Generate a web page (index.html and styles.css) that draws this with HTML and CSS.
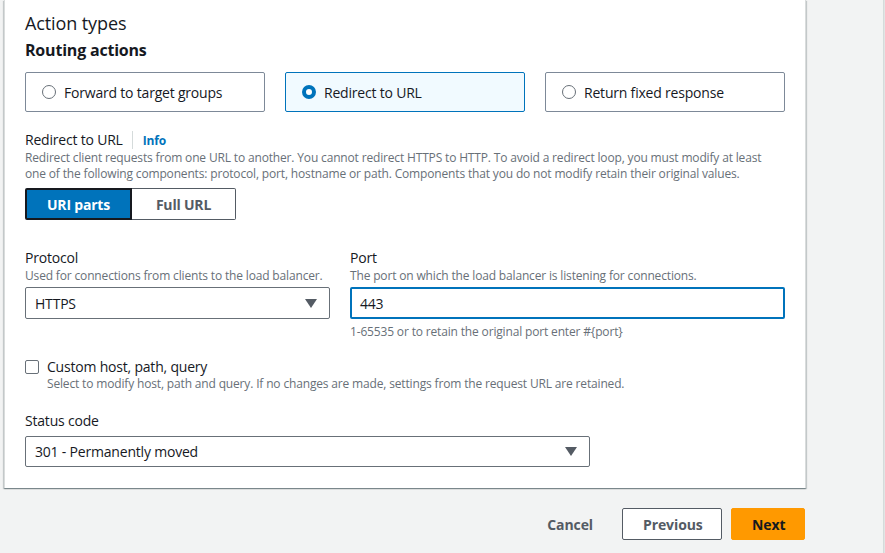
FILE: index.html
```html
<!DOCTYPE html>
<html>
<head>
<meta charset="utf-8">
<link rel="stylesheet" href="styles.css">
</head>
<body>
<div class="page">
  <div class="main">
    <div class="card">
      <h2 class="title">Action types</h2>
      <h3 class="subtitle">Routing actions</h3>
      <div class="tiles">
        <div class="tile"><span class="radio"></span><span>Forward to target groups</span></div>
        <div class="tile selected"><span class="radio on"></span><span>Redirect to URL</span></div>
        <div class="tile"><span class="radio"></span><span>Return fixed response</span></div>
      </div>
      <div class="field-head">
        <span class="label">Redirect to URL</span><span class="divider"></span><a class="info">Info</a>
      </div>
      <p class="desc">Redirect client requests from one URL to another. You cannot redirect HTTPS to HTTP. To avoid a redirect loop, you must modify at least one of the following components: protocol, port, hostname or path. Components that you do not modify retain their original values.</p>
      <div class="segmented">
        <div class="seg active">URI parts</div>
        <div class="seg">Full URL</div>
      </div>
      <div class="row">
        <div class="col col-left">
          <div class="label">Protocol</div>
          <div class="desc nowrap">Used for connections from clients to the load balancer.</div>
          <div class="select"><span>HTTPS</span><span class="caret"></span></div>
        </div>
        <div class="col col-right">
          <div class="label">Port</div>
          <div class="desc">The port on which the load balancer is listening for connections.</div>
          <div class="input focused">443</div>
          <div class="hint">1-65535 or to retain the original port enter #{port}</div>
        </div>
      </div>
      <div class="check-row">
        <span class="checkbox"></span>
        <div>
          <div class="check-label">Custom host, path, query</div>
          <div class="desc">Select to modify host, path and query. If no changes are made, settings from the request URL are retained.</div>
        </div>
      </div>
      <div class="label status-label">Status code</div>
      <div class="select wide"><span>301 - Permanently moved</span><span class="caret"></span></div>
    </div>
    <div class="actions">
      <button class="btn link">Cancel</button>
      <button class="btn normal">Previous</button>
      <button class="btn primary">Next</button>
    </div>
  </div>
  <div class="side"></div>
</div>
</body>
</html>
```

FILE: styles.css
```css
* { box-sizing: border-box; }
html, body { margin: 0; padding: 0; }
body {
  background: #f2f3f3;
  font-family: "Open Sans", "Noto Sans", sans-serif;
  color: #16191f;
  width: 885px;
  height: 553px;
  overflow: hidden;
  letter-spacing: -0.2px;
}
.page {
  display: flex;
  height: 553px;
}
.main {
  width: 806px;
  padding-left: 4px;
}
.side {
  margin-left: 77px;
  width: 2px;
  background: #e3e4e4;
  border-left: 1px solid #d5dbdb;
}
.card {
  background: #fff;
  border-left: 1px solid #d9dcdc;
  border-right: 1px solid #d9dcdc;
  box-shadow: 0 1px 1px 0 rgba(0,28,36,.3), 1px 1px 1px 0 rgba(0,28,36,.15), -1px 1px 1px 0 rgba(0,28,36,.15);
  padding: 10px 20px 20px 20px;
  height: 488px;
}
.title {
  margin: 0;
  font-size: 18px;
  font-weight: 400;
  line-height: 26px;
  letter-spacing: -0.1px;
}
.subtitle {
  margin: 2px 0 0 0;
  font-size: 16px;
  font-weight: 700;
  line-height: 24px;
}
.tiles {
  display: flex;
  gap: 20px;
  margin-top: 10px;
}
.tile {
  width: 240px;
  height: 40px;
  border: 1px solid #7d8998;
  border-radius: 2px;
  display: flex;
  align-items: center;
  padding-left: 16px;
  font-size: 14px;
  gap: 8px;
}
.tile.selected {
  background: #f1faff;
  border-color: #0073bb;
}
.radio {
  width: 14px;
  height: 14px;
  border-radius: 50%;
  border: 1.5px solid #687078;
  display: inline-block;
  flex: none;
}
.radio.on {
  border: 4px solid #0073bb;
  background: #fff;
}
.field-head {
  display: flex;
  align-items: center;
  margin-top: 18px;
  height: 20px;
}
.label {
  font-size: 14px;
  line-height: 20px;
}
.divider {
  width: 1px;
  height: 18px;
  background: #d5dbdb;
  margin: 0 10px 0 9px;
}
.info {
  color: #0073bb;
  font-weight: 700;
  font-size: 12px;
}
.desc {
  margin: 0;
  font-size: 12px;
  line-height: 16px;
  color: #687078;
  letter-spacing: -0.16px;
}
.nowrap { white-space: nowrap; }
.segmented {
  display: flex;
  margin-top: 6px;
}
.seg {
  height: 32px;
  width: 104px;
  border: 1px solid #545b64;
  display: flex;
  align-items: center;
  justify-content: center;
  font-size: 14px;
  font-weight: 700;
  color: #545b64;
}
.seg.active {
  width: 107px;
  background: #0073bb;
  color: #fff;
  border: 2px solid #16191f;
  border-radius: 2px 0 0 2px;
}
.seg + .seg { border-left: none; border-radius: 0 2px 2px 0; }
.row {
  display: flex;
  gap: 20px;
  margin-top: 28px;
}
.col-left { width: 305px; }
.col-right { width: 435px; }
.select, .input {
  margin-top: 3px;
  height: 32px;
  border: 1px solid #687078;
  border-radius: 2px;
  display: flex;
  align-items: center;
  justify-content: space-between;
  padding: 0 10px 0 9px;
  font-size: 14px;
}
.input.focused {
  border: 2px solid #0073bb;
  padding-left: 8px;
}
.caret {
  width: 0; height: 0;
  border-left: 6px solid transparent;
  border-right: 6px solid transparent;
  border-top: 9px solid #545b64;
  margin-right: 2px;
}
.hint {
  margin-top: 5px;
  font-size: 12px;
  line-height: 16px;
  color: #687078;
  letter-spacing: -0.16px;
}
.check-row {
  display: flex;
  gap: 8px;
  margin-top: 17px;
}
.checkbox {
  width: 14px;
  height: 14px;
  border: 1.5px solid #687078;
  border-radius: 2px;
  margin-top: 3px;
  flex: none;
}
.check-label {
  font-size: 14px;
  line-height: 20px;
}
.check-row .desc { margin-top: -1px; }
.status-label { margin-top: 19px; }
.select.wide {
  width: 565px;
  height: 31px;
  margin-top: 5px;
}
.actions {
  display: flex;
  justify-content: flex-end;
  align-items: center;
  gap: 9px;
  margin-top: 20px;
  padding-right: 1px;
}
.btn {
  font-family: inherit;
  font-size: 14px;
  font-weight: 700;
  height: 32px;
  border-radius: 2px;
  padding: 0 20px;
  cursor: pointer;
  letter-spacing: -0.1px;
}
.btn.link {
  background: none;
  border: none;
  color: #545b64;
}
.btn.normal {
  background: #fff;
  border: 1px solid #545b64;
  color: #545b64;
  width: 100px;
}
.btn.primary {
  background: #ff9900;
  border: 1px solid #ff9900;
  color: #16191f;
  width: 74px;
}
```
